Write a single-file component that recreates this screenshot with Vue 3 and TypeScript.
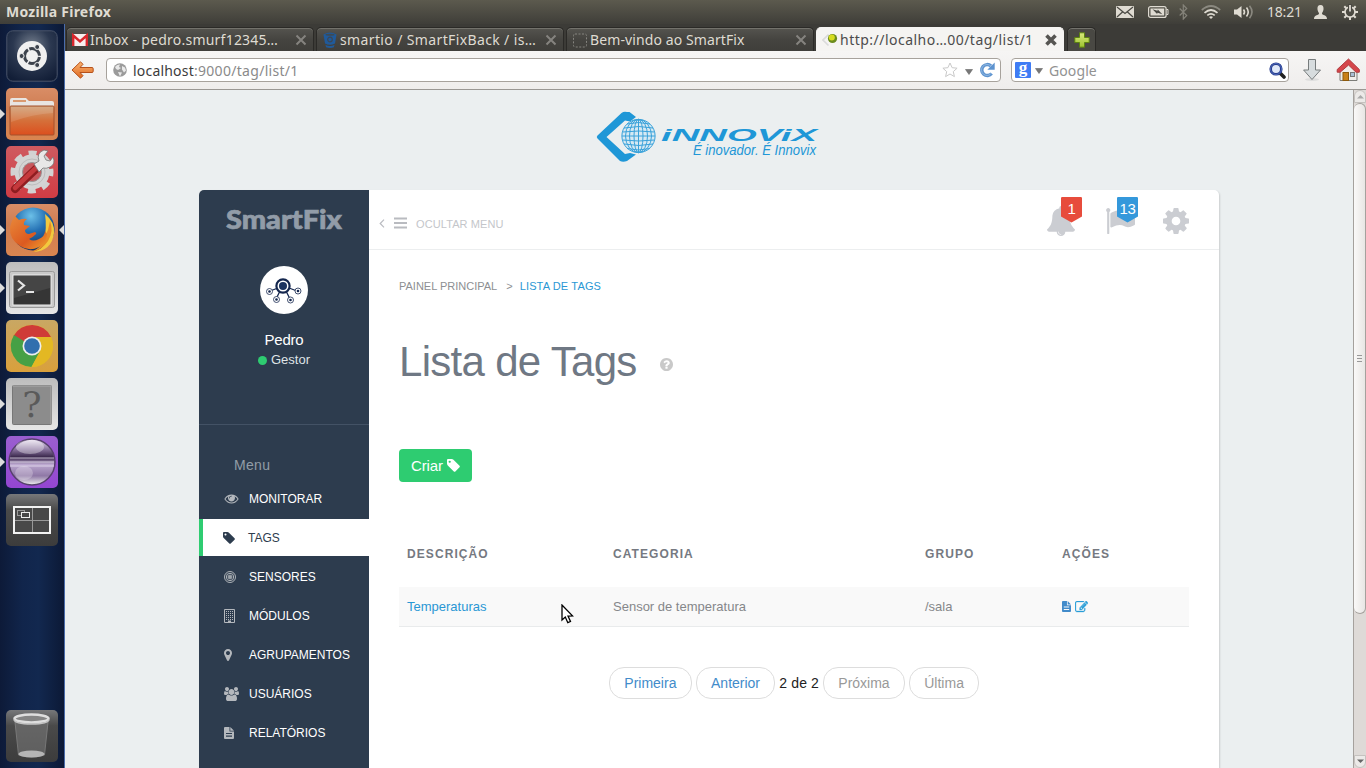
<script setup lang="ts">
interface Tab { title: string; icon: string; active?: boolean; cls: string }
interface MenuItem { label: string; icon: string; active?: boolean; w: number; h: number; box: string }

const tabs: Tab[] = [
  { title: 'Inbox - pedro.smurf12345…', icon: 'gmail', cls: 't1' },
  { title: 'smartio / SmartFixBack / is…', icon: 'bucket', cls: 't2' },
  { title: 'Bem-vindo ao SmartFix', icon: 'blank', cls: 't3' },
  { title: 'http://localho…00/tag/list/1', icon: 'site', active: true, cls: 't4' },
]

const paths: Record<string, string> = {
  eye: 'M1664 960q-152-236-381-353 61 104 61 225 0 185-131.5 316.5t-316.5 131.5-316.5-131.5-131.5-316.5q0-121 61-225-229 117-381 353 133 205 333.5 326.5t434.5 121.5 434.5-121.5 333.5-326.5zm-720-384q0-20-14-34t-34-14q-125 0-214.5 89.5t-89.5 214.5q0 20 14 34t34 14 34-14 14-34q0-86 61-147t147-61q20 0 34-14t14-34zm848 384q0 34-20 69-140 230-376.5 368.5t-499.5 138.5-499.5-139-376.5-368q-20-35-20-69t20-69q140-229 376.5-368t499.5-139 499.5 139 376.5 368q20 35 20 69z',
  tag: 'M576 448q0-53-37.5-90.5t-90.5-37.5-90.5 37.5-37.5 90.5 37.5 90.5 90.5 37.5 90.5-37.5 37.5-90.5zm1067 576q0 53-37 90l-491 492q-39 37-91 37-53 0-90-37l-715-716q-38-37-64.5-101t-26.5-117v-416q0-52 38-90t90-38h416q53 0 117 26.5t102 64.5l715 714q37 39 37 91z',
  cog: 'M1152 896q0-106-75-181t-181-75-181 75-75 181 75 181 181 75 181-75 75-181zm512-109v222q0 12-8 23t-20 13l-185 28q-19 54-39 91 35 50 107 138 10 12 10 25t-9 23q-27 37-99 108t-94 71q-12 0-26-9l-138-108q-44 23-91 38-16 136-29 186-7 28-36 28h-222q-14 0-24.5-8.5t-11.5-21.5l-28-184q-49-16-90-37l-141 107q-10 9-25 9-14 0-25-11-126-114-165-168-7-10-7-23 0-12 8-23 15-21 51-66.5t54-70.5q-27-50-41-99l-183-27q-13-2-21-12.5t-8-23.5v-222q0-12 8-23t19-13l186-28q14-46 39-92-40-57-107-138-10-12-10-24 0-10 9-23 26-36 98.5-107.5t94.5-71.5q13 0 26 10l138 107q44-23 91-38 16-136 29-186 7-28 36-28h222q14 0 24.5 8.5t11.5 21.5l28 184q49 16 90 37l142-107q9-9 24-9 13 0 25 10 129 119 165 170 7 8 7 22 0 12-8 23-15 21-51 66.5t-54 70.5q26 50 41 98l183 28q13 2 21 12.5t8 23.5z',
  bell: 'M912 1696q0-16-16-16-59 0-101.5-42.5t-42.5-101.5q0-16-16-16t-16 16q0 73 51.5 124.5t124.5 51.5q16 0 16-16zm816-288q0 52-38 90t-90 38h-448q0 106-75 181t-181 75-181-75-75-181h-448q-52 0-90-38t-38-90q50-42 91-88t85-119.5 74.5-158.5 50-206 19.5-260q0-152 117-282.5t307-158.5q-8-19-8-39 0-40 28-68t68-28 68 28 28 68q0 20-8 39 190 28 307 158.5t117 282.5q0 139 19.5 260t50 206 74.5 158.5 85 119.5 91 88z',
  flag: 'M320 256q0 72-64 110v1266q0 13-9.5 22.5t-22.5 9.5h-64q-13 0-22.5-9.5t-9.5-22.5v-1266q-64-38-64-110 0-53 37.5-90.5t90.5-37.5 90.5 37.5 37.5 90.5zm1472 64v763q0 25-12.5 38.5t-39.5 27.5q-215 116-369 116-61 0-123.5-22t-108.5-48-115.5-48-142.5-22q-192 0-464 146-17 9-33 9-26 0-45-19t-19-45v-742q0-32 31-55 21-14 79-43 236-120 421-120 107 0 200 29t219 88q38 19 88 19 54 0 117.5-21t110-47 88-47 54.5-21q26 0 45 19t19 45z',
  marker: 'M1152 640q0-106-75-181t-181-75-181 75-75 181 75 181 181 75 181-75 75-181zm256 0q0 109-33 179l-364 774q-16 33-47.5 52t-67.5 19-67.5-19-46.5-52l-365-774q-33-70-33-179 0-212 150-362t362-150 362 150 150 362z',
  question: 'M1024 1376v-192q0-14-9-23t-23-9h-192q-14 0-23 9t-9 23v192q0 14 9 23t23 9h192q14 0 23-9t9-23zm256-672q0-88-55.5-163t-138.5-116-170-41q-243 0-371 213-15 24 8 42l132 100q7 6 19 6 16 0 25-12 53-68 86-92 34-24 86-24 48 0 85.5 26t37.5 59q0 38-20 61t-68 45q-63 28-115.5 86.5t-52.5 125.5v36q0 14 9 23t23 9h192q14 0 23-9t9-23q0-19 21.5-49.5t54.5-49.5q32-18 49-28.5t46-35 44.5-48 28-60.5 12.5-81zm384 192q0 209-103 385.5t-279.5 279.5-385.5 103-385.5-103-279.5-279.5-103-385.5 103-385.5 279.5-279.5 385.5-103 385.5 103 279.5 279.5 103 385.5z',
  edit: 'M888 1184l116-116-152-152-116 116v56h96v96h56zm440-720q-16-16-33 1l-350 350q-17 17-1 33t33-1l350-350q17-17 1-33zm80 594v190q0 119-84.5 203.5t-203.5 84.5h-832q-119 0-203.5-84.5t-84.5-203.5v-832q0-119 84.5-203.5t203.5-84.5h832q63 0 117 25 15 7 18 23 3 17-9 29l-49 49q-14 14-32 8-23-6-45-6h-832q-66 0-113 47t-47 113v832q0 66 47 113t113 47h832q66 0 113-47t47-113v-126q0-13 9-22l64-64q15-15 35-7t20 29zm-96-738l288 288-672 672h-288v-288zm444 132l-92 92-288-288 92-92q28-28 68-28t68 28l152 152q28 28 28 68t-28 68z',
  users: 'M593 896q-162 5-265 128h-134q-82 0-138-40.5t-56-118.5q0-353 124-353 6 0 43.5 21t97.5 42.5 119 21.5q67 0 133-23-5 37-5 66 0 139 81 256zm1071 637q0 120-73 189.5t-194 69.5h-874q-121 0-194-69.5t-73-189.5q0-53 3.5-103.5t14-109 26.5-108.5 43-97.5 62-81 85.5-53.5 111.5-20q10 0 43 21.5t73 48 107 48 135 21.5 135-21.5 107-48 73-48 43-21.5q61 0 111.5 20t85.5 53.5 62 81 43 97.5 26.5 108.5 14 109 3.5 103.5zm-1024-1277q0 106-75 181t-181 75-181-75-75-181 75-181 181-75 181 75 75 181zm704 384q0 159-112.5 271.5t-271.5 112.5-271.5-112.5-112.5-271.5 112.5-271.5 271.5-112.5 271.5 112.5 112.5 271.5zm576 225q0 78-56 118.5t-138 40.5h-134q-103-123-265-128 81-117 81-256 0-29-5-66 66 23 133 23 59 0 119-21.5t97.5-42.5 43.5-21q124 0 124 353zm-128-609q0 106-75 181t-181 75-181-75-75-181 75-181 181-75 181 75 75 181z',
  file: 'M0 1Q0 0 1 0H5.500V4.500H10V11Q10 12 9 12H1Q0 12 0 11ZM6.300 0L10 3.700H6.300ZM2 6V7.100H8V6ZM2 8.600V9.700H8V8.600Z',
}

const menu: MenuItem[] = [
  { label: 'MONITORAR', icon: 'eye', w: 15, h: 14, box: '0 64 1792 1792' },
  { label: 'TAGS', icon: 'tag', active: true, w: 12, h: 12, box: '128 128 1536 1536' },
  { label: 'SENSORES', icon: 'sensor', w: 12, h: 12, box: '0 0 12 12' },
  { label: 'MÓDULOS', icon: 'building', w: 11, h: 14, box: '0 0 11 14' },
  { label: 'AGRUPAMENTOS', icon: 'marker', w: 8, h: 12, box: '384 128 1024 1536' },
  { label: 'USUÁRIOS', icon: 'users', w: 15, h: 14, box: '0 0 1920 1792' },
  { label: 'RELATÓRIOS', icon: 'file', w: 10, h: 12, box: '0 0 10 12' },
]

const rows = [{ name: 'Temperaturas', category: 'Sensor de temperatura', group: '/sala' }]
const launcher = [
  { id: 'dash' }, { id: 'files', run: true }, { id: 'settings' },
  { id: 'firefox', run: true, focus: true }, { id: 'term', run: true },
  { id: 'chrome' }, { id: 'unknown', run: true }, { id: 'eclipse', run: true }, { id: 'spaces' },
]
const dots: number[][] = []
for (let r = 0; r < 5; r++) for (let c = 0; c < 4; c++) dots.push([2 + c * 2, 2 + r * 2])
</script>

<template>
  <div class="desktop">
    <svg class="defs" width="0" height="0" aria-hidden="true">
      <defs>
        <linearGradient id="gOrange" x1="0" y1="0" x2="0" y2="1"><stop offset="0" stop-color="#d98d66" /><stop offset=".4" stop-color="#cf7d52" /><stop offset="1" stop-color="#d98550" /></linearGradient>
        <linearGradient id="gFolder" x1="0" y1="0" x2="0" y2="1"><stop offset="0" stop-color="#d0a076" /><stop offset=".5" stop-color="#d5703a" /><stop offset="1" stop-color="#dc4f1e" /></linearGradient>
        <linearGradient id="gRed" x1="0" y1="0" x2="0" y2="1"><stop offset="0" stop-color="#cf5a60" /><stop offset="1" stop-color="#d03c44" /></linearGradient>
        <linearGradient id="gSilver" x1="0" y1="0" x2="0" y2="1"><stop offset="0" stop-color="#bdbdbd" /><stop offset="1" stop-color="#e6e6e6" /></linearGradient>
        <linearGradient id="gGold" x1="0" y1="0" x2="0" y2="1"><stop offset="0" stop-color="#c9a763" /><stop offset="1" stop-color="#d9a03c" /></linearGradient>
        <linearGradient id="gPurple" x1="0" y1="0" x2="0" y2="1"><stop offset="0" stop-color="#9a5fd0" /><stop offset="1" stop-color="#9446d2" /></linearGradient>
        <linearGradient id="gDark" x1="0" y1="0" x2="0" y2="1"><stop offset="0" stop-color="#77787a" /><stop offset=".3" stop-color="#4a4a4a" /><stop offset="1" stop-color="#3c3c3c" /></linearGradient>
        <radialGradient id="gDash" cx=".5" cy=".3" r=".75"><stop offset="0" stop-color="#76808f" /><stop offset=".5" stop-color="#2b3850" /><stop offset="1" stop-color="#121e37" /></radialGradient>
        <radialGradient id="gGlobe" cx=".45" cy=".2" r=".8"><stop offset="0" stop-color="#6cc0e8" /><stop offset=".45" stop-color="#2571b4" /><stop offset="1" stop-color="#12305f" /></radialGradient>
        <linearGradient id="gFox" x1="0" y1="0" x2="1" y2="1"><stop offset="0" stop-color="#e8893a" /><stop offset=".6" stop-color="#dc5a20" /><stop offset="1" stop-color="#f0a030" /></linearGradient>
        <linearGradient id="gEcl" x1="0" y1="0" x2="0" y2="1"><stop offset="0" stop-color="#eee6f4" /><stop offset=".22" stop-color="#8b76a0" /><stop offset=".4" stop-color="#362448" /><stop offset=".55" stop-color="#bca8d0" /><stop offset=".8" stop-color="#8f78a6" /><stop offset="1" stop-color="#eee" /></linearGradient>
        <linearGradient id="gArrow" x1="0" y1="0" x2="0" y2="1"><stop offset="0" stop-color="#fbb26f" /><stop offset="1" stop-color="#de6a23" /></linearGradient>
        <linearGradient id="gPlus" x1="0" y1="0" x2="0" y2="1"><stop offset="0" stop-color="#d8ea7c" /><stop offset="1" stop-color="#9cc22f" /></linearGradient>
      </defs>
    </svg>

    <header class="panel">
      <span class="panel-title">Mozilla Firefox</span>
      <div class="tray">
        <svg class="i-mail" width="18" height="12" viewBox="0 0 18 12"><rect width="18" height="12" rx="1" fill="#dfdbd2" /><path d="M1 1l8 6.500L17 1M1 11l5.500-5M17 11l-5.500-5" fill="none" stroke="#4a4943" stroke-width="1.200" /></svg>
        <svg class="i-bat" width="21" height="12" viewBox="0 0 21 12"><rect x=".6" y=".6" width="17.500" height="10.800" rx="2" fill="none" stroke="#dfdbd2" stroke-width="1.200" /><path d="M18.500 3.500H20v5h-1.500" fill="none" stroke="#dfdbd2" /><rect x="2.500" y="2.500" width="13.700" height="7" fill="#dfdbd2" /><path d="M4.500 3.200l5 1.500.3-1.200 4.500 4.800-4.800-1.500-.4 1.200z" fill="#4a4943" /></svg>
        <svg class="i-bt" width="9" height="16" viewBox="0 0 9 16"><path d="M.7 4.500l7 7L4.300 15V1l3.400 3.500-7 7" fill="none" stroke="#85837a" stroke-width="1.200" /></svg>
        <svg class="i-wifi" width="20" height="14" viewBox="0 0 20 14"><g fill="none" stroke="#dfdbd2" stroke-width="1.700"><path d="M.8 5q9.200-8 18.400 0" stroke="#8b8980" /><path d="M3.500 7.800q6.500-5.600 13 0" /><path d="M6.300 10.400q3.700-3 7.400 0" /></g><path d="M8 12q2-1.500 4 0l-2 2z" fill="#dfdbd2" /></svg>
        <svg class="i-vol" width="20" height="14" viewBox="0 0 20 14"><path d="M0 4.500h3L7.500 1v12L3 9.500H0z" fill="#dfdbd2" /><g fill="none" stroke="#dfdbd2" stroke-width="1.600"><path d="M9.500 4.500q2 2.500 0 5" /><path d="M12.500 2.500q3.500 4.500 0 9" /><path d="M15.500.8q5 6.200 0 12.400" stroke="#8b8980" /></g></svg>
        <span class="clock">18:21</span>
        <svg class="i-user" width="13" height="14" viewBox="0 0 13 14"><path d="M6.500 0C9 0 9.800 1.800 9.500 4.500 9.300 6.500 8 7.500 8 8.800c0 1.500 5 1 5 5.200H0c0-4.200 5-3.700 5-5.200 0-1.300-1.300-2.300-1.500-4.300C3.200 1.800 4 0 6.500 0z" fill="#dfdbd2" /></svg>
        <svg class="i-power" width="16" height="16" viewBox="0 0 16 16"><circle cx="8" cy="8" r="5" fill="none" stroke="#dfdbd2" stroke-width="1.700" /><g stroke="#dfdbd2" stroke-width="2"><path d="M0 8h3M13 8h3M8 13v3M2.300 2.300l2 2M13.700 2.300l-2 2M2.300 13.700l2-2M13.700 13.700l-2-2" /></g><path d="M6 0h4v8H6z" fill="#4a4943" /><path d="M8 1v6.500" stroke="#dfdbd2" stroke-width="1.800" /></svg>
      </div>
    </header>

    <div class="workspace">
      <aside class="launcher">
        <div v-for="l in launcher" :key="l.id" class="slot">
          <i v-if="l.run" class="run"></i>
          <svg width="52" height="52" viewBox="0 0 52 52">
            <g v-if="l.id === 'dash'"><rect x=".8" y=".8" width="50.400" height="50.400" rx="6" fill="url(#gDash)" stroke="#4a556a" /><circle cx="26" cy="26" r="15" fill="#f0f0f0" /><circle cx="26" cy="26" r="7.500" fill="none" stroke="#3d434d" stroke-width="3" stroke-dasharray="14.200 1.500" stroke-dashoffset="-1" /><g fill="#3d434d" stroke="#f0f0f0" stroke-width="1"><circle cx="15.600" cy="26" r="2.500" /><circle cx="31.200" cy="17" r="2.500" /><circle cx="31.200" cy="35" r="2.500" /></g></g>
            <g v-else-if="l.id === 'files'"><rect width="52" height="52" rx="5" fill="url(#gOrange)" /><path d="M4 20v-8q0-2 2-2h14l3 3h23q2 0 2 2v5z" fill="#e8e5e2" /><rect x="7" y="12" width="13" height="2" fill="#d99a70" /><rect x="4" y="18" width="44" height="29" rx="1" fill="url(#gFolder)" stroke="#a4502c" /><path d="M5 34q22-8 42-9V19H5z" fill="#fff" opacity=".12" /></g>
            <g v-else-if="l.id === 'settings'"><rect width="52" height="52" rx="5" fill="url(#gRed)" /><circle cx="26" cy="26" r="19" fill="none" stroke="#d2d2d2" stroke-width="5" stroke-dasharray="8 6.920" stroke-dashoffset="4" /><circle cx="26" cy="26" r="13.500" fill="none" stroke="#d4d4d4" stroke-width="8" /><circle cx="26" cy="26" r="13" fill="none" stroke="#bdbdbd" stroke-width="1" /><circle cx="26" cy="26" r="9.500" fill="#c8575c" stroke="#999" /><path d="M9 43L33 20" stroke="#8f1d20" stroke-width="8" stroke-linecap="round" /><path d="M9 42L32 20" stroke="#c5393c" stroke-width="4.500" stroke-linecap="round" /><path d="M28 18l5-3q-3-8 5-11l4 1-4 5 2 4 4 1 3-4q3 7-3 10-4 2-7 1l-4 4z" fill="#e8e8e8" stroke="#777" stroke-width=".8" /></g>
            <g v-else-if="l.id === 'firefox'"><rect width="52" height="52" rx="5" fill="url(#gOrange)" /><circle cx="27" cy="25" r="21.500" fill="url(#gGlobe)" /><path d="M39 10q10 8 9 19-2 18-21 19 14-4 14-18-1 4-3 6 3-12 1-26z" fill="#f2c93e" /><path d="M44 17q4 10-2 20-6 9-16 11 14-8 14-18l2-4z" fill="#e98b28" /><path d="M9 12l4 4q4-2 8-1-4 3-3 6l6 1-5 4q0 4 4 4l6-2q2 1 1 2-4 4-7 5 4 3 10 0 6-3 6-8l2 3q0 9-8 13-10 5-19-1Q3 35 4 23q1-6 5-11z" fill="url(#gFox)" /></g>
            <g v-else-if="l.id === 'term'"><rect width="52" height="52" rx="5" fill="url(#gSilver)" /><rect x="3.500" y="9.500" width="45" height="36" rx="2" fill="#c9c9c9" stroke="#999" /><rect x="7" y="13" width="38" height="30" fill="#353535" stroke="#eee" /><path d="M8 14h36v12L8 36z" fill="#555" opacity=".5" /><path d="M12 18.500l6 5-6 5M20 30h8" stroke="#e5e5e5" stroke-width="2.200" fill="none" /></g>
            <g v-else-if="l.id === 'chrome'"><rect width="52" height="52" rx="5" fill="url(#gGold)" /><circle cx="26" cy="26" r="21" fill="#e3b823" /><path d="M26 26L7.500 16A21 21 0 0 1 45 17H26z" fill="#cf3b37" /><path d="M26 26L8 15A21 21 0 0 0 25.500 47l9-16z" fill="#46a045" /><path d="M26 17h19a21 21 0 0 1-19.500 30l8.500-16z" fill="#e3b823" /><circle cx="26" cy="26" r="9.500" fill="#eee" /><circle cx="26" cy="26" r="7.800" fill="#316fae" /></g>
            <g v-else-if="l.id === 'unknown'"><rect width="52" height="52" rx="5" fill="url(#gSilver)" /><rect x="6.500" y="7.500" width="39" height="39" rx="1" fill="#8c8c8c" stroke="#777" /><path d="M7 8h38v38" fill="none" stroke="#aaa" /><text x="26" y="38.500" text-anchor="middle" class="qm">?</text></g>
            <g v-else-if="l.id === 'eclipse'"><rect width="52" height="52" rx="5" fill="url(#gPurple)" /><circle cx="26" cy="26" r="23" fill="url(#gEcl)" stroke="#56416c" stroke-width="1.500" /><path d="M4 22h44M4 26h44M4 30h44" stroke="#e8dff0" stroke-width="1.200" opacity=".8" /><ellipse cx="24" cy="11" rx="14" ry="7" fill="#fff" opacity=".35" /><ellipse cx="18" cy="37" rx="9" ry="7" fill="#fff" opacity=".25" /></g>
            <g v-else><rect width="52" height="52" rx="5" fill="url(#gDark)" /><rect x="8" y="13" width="36" height="26" fill="#484848" stroke="#f2f2f2" stroke-width="2" /><path d="M26.500 14v24M9 26.500h34" stroke="#999" /><rect x="11.500" y="16.500" width="7" height="5" fill="none" stroke="#999" /><rect x="15.500" y="18.500" width="8" height="5" fill="#484848" stroke="#eee" /></g>
          </svg>
          <i v-if="l.focus" class="focus"></i>
        </div>
        <div class="slot trash">
          <svg width="52" height="52" viewBox="0 0 52 52"><rect width="52" height="52" rx="5" fill="url(#gDark)" /><path d="M9 12l3.500 33q13 4 26 0L42 12z" fill="#808080" opacity=".5" stroke="#aaa" /><ellipse cx="25.500" cy="44" rx="13" ry="3.500" fill="#b5b5b5" /><ellipse cx="25.500" cy="8.500" rx="17" ry="4" fill="#858585" stroke="#dedede" stroke-width="2.500" /><path d="M8 9.500q1 4.500 17.500 4.500T43 9.500" fill="none" stroke="#c4c4c4" stroke-width="1.500" /></svg>
        </div>
      </aside>

      <section class="browser">
        <nav class="tabs">
          <div v-for="t in tabs" :key="t.title" class="tab" :class="[t.cls, { on: t.active }]">
            <svg class="fav" width="16" height="16" viewBox="0 0 16 16">
              <g v-if="t.icon === 'gmail'"><rect y="2" width="16" height="12" rx="1" fill="#f6eeee" /><path d="M1.200 14V3.500L8 9.500l6.800-6V14" fill="none" stroke="#d8262c" stroke-width="2.400" /></g>
              <g v-else-if="t.icon === 'bucket'"><path d="M1.500 2.500q6.500-4 13 0L13 11.500q-5 2.500-10 0z" fill="#205a9a" /><ellipse cx="8" cy="2.800" rx="4.500" ry="1" fill="#3d4a55" /><circle cx="8" cy="7.500" r="2.300" fill="none" stroke="#3d4652" stroke-width="1.200" /><path d="M3.500 13q4.500 2 9 0l-.6 2.200q-4 1.600-7.800 0z" fill="#205a9a" /></g>
              <rect v-else-if="t.icon === 'blank'" x="1.500" y="2" width="13" height="13" rx="1.500" fill="none" stroke="#85847f" stroke-dasharray="2 1.500" />
              <g v-else><path d="M6.500 2.500L1 8l5.500 5.500" fill="none" stroke="#dadada" stroke-width="1.600" /><circle cx="10.500" cy="6.500" r="4.600" fill="#6c8c1e" /><circle cx="9.800" cy="5.500" r="3" fill="#d6dc20" /></g>
            </svg>
            <span class="tab-text">{{ t.title }}</span>
            <svg class="close" width="12" height="12" viewBox="0 0 12 12"><path d="M1.500 1.500l9 9M10.500 1.500l-9 9" :stroke="t.active ? '#565552' : '#85837f'" :stroke-width="t.active ? 3.6 : 2" /></svg>
          </div>
          <div class="newtab"><svg width="16" height="16" viewBox="0 0 16 16"><path d="M5.500.8h5v4.700h4.700v5h-4.700v4.700h-5v-4.700H.8v-5h4.700z" fill="url(#gPlus)" stroke="#5d8212" /></svg></div>
        </nav>

        <div class="toolbar">
          <svg class="back" width="23" height="18" viewBox="0 0 23 18"><path d="M9.500.8L1 9l8.500 8.200 2.500-2.500-3-3.200h12q1.200 0 1.200-1.200V7.700q0-1.200-1.200-1.200H9l3-3.200z" fill="url(#gArrow)" stroke="#b5511c" /></svg>
          <div class="urlbar">
            <svg width="14" height="14" viewBox="0 0 14 14"><circle cx="7" cy="7" r="6.800" fill="#9b9b9b" /><path d="M2 4q2-3 5-2.500L6 4l2 1-3 2-2-1zM9 3l3 1.500 1 3-2 2-2-3zM5 9l4 .500-2 4z" fill="#e9e9e9" /></svg>
            <span class="url"><b>localhost</b>:9000/tag/list/1</span>
            <svg class="star" width="16" height="16" viewBox="0 0 16 16"><path d="M8 1l2.100 4.700 5 .5-3.800 3.400 1.100 5L8 12l-4.400 2.600 1.100-5L.9 6.200l5-.5z" fill="#fff" stroke="#c9c9c9" /></svg>
            <svg class="dd" width="8" height="6" viewBox="0 0 8 6"><path d="M.5.500h7L4 5.500z" fill="#777" stroke="#666" stroke-width=".6" /></svg>
            <svg class="reload" width="16" height="16" viewBox="0 0 16 16"><path d="M12.600 11.500A5.500 5.500 0 1 1 12 4" fill="none" stroke="#5d93cf" stroke-width="3.400" /><path d="M15.700.5v7.300H8.300z" fill="#5d93cf" /><path d="M12.600 11A5.500 5.500 0 1 1 12 4.200" fill="none" stroke="#9cc0e6" stroke-width=".8" /></svg>
          </div>
          <div class="search">
            <span class="goog">g</span>
            <svg class="dd2" width="8" height="6" viewBox="0 0 8 6"><path d="M.5.500h7L4 5.500z" fill="#777" stroke="#666" stroke-width=".6" /></svg>
            <span class="ph">Google</span>
            <svg width="17" height="17" viewBox="0 0 17 17"><path d="M11.500 11.500l3.500 3.500" stroke="#222" stroke-width="3.600" stroke-linecap="round" /><circle cx="7" cy="7" r="5.300" fill="#dfe8f8" stroke="#243a8c" stroke-width="2.600" /><circle cx="7" cy="7" r="5.500" fill="none" stroke="#5b76c4" stroke-width=".8" /></svg>
          </div>
          <svg class="down" width="18" height="22" viewBox="0 0 18 22"><ellipse cx="9" cy="20.500" rx="7" ry="1.500" fill="#ddd" /><path d="M5.500.5h7v10.500h5L9 20.500.6 11h4.900z" fill="#d7dcde" stroke="#777c7d" /></svg>
          <svg class="home" width="24" height="24" viewBox="0 0 24 24"><path d="M4 12v10.500h17V12l-8.500-8z" fill="#f0eeeb" stroke="#7c7c78" /><path d="M12.500 1L1.200 11.500v2.700h3L12.500 7l7.500 7.200h3.300v-2.700z" fill="#d5454a" stroke="#b03a3e" /><rect x="7" y="14.500" width="5.500" height="8" fill="#c98018" stroke="#8e5a0c" /><rect x="14.500" y="14.500" width="4" height="4" fill="#a9bfd6" stroke="#777" /></svg>
        </div>

        <div class="viewport">
          <div class="page">
            <div class="brand">
              <svg width="240" height="56" viewBox="0 0 240 56">
                <path d="M27.500 4q2.500-2 5.500-1h2.500l6.500 5-6 4.500-5-1L12.500 28 31 45l5-1 6 1.500-9 6.500q-4 1.500-7 0L3.500 29.500q-1.500-1.500 0-3z" fill="#1f97d7" />
                <circle cx="44.500" cy="27" r="17" fill="#d5e9f3" />
                <g fill="none" stroke="#3aa2da" stroke-width="1"><circle cx="44.500" cy="27" r="16.600" /><ellipse cx="44.500" cy="27" rx="13" ry="16.600" /><ellipse cx="44.500" cy="27" rx="9" ry="16.600" /><ellipse cx="44.500" cy="27" rx="4.500" ry="16.600" /><path d="M44.500 10.500v33M33 15q11.500-3 23 0M30 19q15-3 29 0M28.500 23q16.500-2 32 0M28 27h33M28.500 31q16.500 2 32 0M30 35q15 3 29 0M33 39.500q11.500 3 23 0" /></g>
                <text x="67" y="31.500" class="bt" textLength="156" lengthAdjust="spacingAndGlyphs">iNNOViX</text>
                <text x="99" y="46" class="bs" textLength="123" lengthAdjust="spacingAndGlyphs">É inovador. É Innovix</text>
              </svg>
            </div>

            <div class="card">
              <aside class="side">
                <div class="sf"><svg width="140" height="34" viewBox="0 0 140 34"><text x="1" y="24.500" class="sft" textLength="116" lengthAdjust="spacingAndGlyphs">SmartFix</text></svg></div>
                <div class="profile">
                  <svg width="48" height="48" viewBox="0 0 48 48"><circle cx="24" cy="24" r="24" fill="#fff" /><g stroke="#14264e" stroke-width="1.300" fill="none"><path d="M18 22l-8 3M29 22l8 3M20 25l-4 8M26 25l4 8" /><g fill="#fff" stroke-width=".8"><circle cx="9.500" cy="25.500" r="3" /><circle cx="38" cy="25" r="3" /><circle cx="16.500" cy="33.500" r="3" /><circle cx="30.500" cy="34" r="3" /></g></g><circle cx="23" cy="20" r="6.600" fill="#fff" stroke="#14264e" stroke-width="2.200" /><circle cx="23" cy="20" r="4" fill="#1b335f" /><g fill="#14264e"><circle cx="9.500" cy="25.500" r="1.300" /><circle cx="38" cy="25" r="1.300" /><circle cx="16.500" cy="33.500" r="1.300" /><circle cx="30.500" cy="34" r="1.300" /></g></svg>
                  <div class="name">Pedro</div>
                  <div class="role"><i></i>Gestor</div>
                </div>
                <div class="mlabel">Menu</div>
                <ul class="menu">
                  <li v-for="m in menu" :key="m.label" :class="{ act: m.active }">
                    <span class="mi">
                      <svg :width="m.w" :height="m.h" :viewBox="m.box">
                        <g v-if="m.icon === 'sensor'" fill="none" stroke="currentColor" stroke-width=".95"><circle cx="6" cy="6" r="5.500" /><circle cx="6" cy="6" r="3.700" /><circle cx="6" cy="6" r="1.900" /><circle cx="6" cy="6" r=".7" fill="currentColor" /></g>
                        <g v-else-if="m.icon === 'building'"><path d="M.5.500h10v13H.500z" fill="none" stroke="currentColor" /><rect v-for="d in dots" :key="d.join()" :x="d[0]" :y="d[1]" width="1" height="1" fill="currentColor" /><path d="M4 11.500h3V14H4z" fill="currentColor" /></g>
                        <path v-else :d="paths[m.icon]" fill="currentColor" fill-rule="evenodd" />
                      </svg>
                    </span>
                    <span>{{ m.label }}</span>
                  </li>
                </ul>
              </aside>

              <main class="main">
                <div class="bar">
                  <svg class="chev" width="6" height="9" viewBox="0 0 6 9"><path d="M5 .7L1.200 4.500 5 8.300" fill="none" stroke="#b9bbc0" stroke-width="1.200" /></svg>
                  <svg class="burger" width="13" height="12" viewBox="0 0 13 12"><path d="M0 1.500h13M0 6h13M0 10.500h13" stroke="#b9bbc0" stroke-width="2" /></svg>
                  <span class="hide">OCULTAR MENU</span>
                  <div class="acts">
                    <span class="act-i bell"><svg width="28" height="30" viewBox="64 0 1664 1792" preserveAspectRatio="none"><path :d="paths.bell" /></svg><em class="badge red">1</em></span>
                    <span class="act-i flag"><svg width="30" height="26" viewBox="0 128 1792 1536" preserveAspectRatio="none"><path :d="paths.flag" /></svg><em class="badge blue">13</em></span>
                    <span class="act-i gear"><svg width="26" height="26" viewBox="128 128 1536 1536"><path :d="paths.cog" /></svg></span>
                  </div>
                </div>
                <div class="content">
                  <div class="crumb">PAINEL PRINCIPAL<span>&gt;</span><a>LISTA DE TAGS</a></div>
                  <h1>Lista de Tags <svg width="13" height="13" viewBox="128 128 1536 1536"><path :d="paths.question" fill="#c9c9c9" /></svg></h1>
                  <button class="create">Criar <svg width="13" height="13" viewBox="128 128 1536 1536"><path :d="paths.tag" fill="#fff" /></svg></button>
                  <div class="grid head"><span>DESCRIÇÃO</span><span>CATEGORIA</span><span>GRUPO</span><span>AÇÕES</span></div>
                  <div v-for="r in rows" :key="r.name" class="grid row">
                    <span class="link">{{ r.name }}</span><span>{{ r.category }}</span><span>{{ r.group }}</span>
                    <span class="ops"><svg width="9" height="11" viewBox="0 0 10 12" preserveAspectRatio="none"><path :d="paths.file" fill="#428bca" fill-rule="evenodd" /></svg><svg width="13" height="12" viewBox="0 128 1792 1536" preserveAspectRatio="none"><path :d="paths.edit" fill="#2a9fd8" stroke="#2a9fd8" stroke-width="40" /></svg></span>
                  </div>
                  <div class="pager">
                    <a>Primeira</a><a>Anterior</a><span>2 de 2</span><a class="off">Próxima</a><a class="off">Última</a>
                  </div>
                </div>
              </main>
            </div>
          </div>
          <div class="scroll">
            <div class="sbtn"><svg width="7" height="5" viewBox="0 0 7 5"><path d="M0 4.500L3.500 1 7 4.500z" fill="#aaa" /></svg></div>
            <div class="thumb"><i></i><i></i><i></i></div>
            <div class="sbtn end"><svg width="7" height="5" viewBox="0 0 7 5"><path d="M0 .5L3.500 4 7 .5z" fill="#666" /></svg></div>
          </div>
        </div>
      </section>
    </div>
    <svg class="cursor" width="13" height="20" viewBox="0 0 13 20"><path d="M1 1v15l3.300-3 2.500 5.700 2.700-1.200L7 12l4.500-.2z" fill="#fff" stroke="#000" stroke-width="1.300" /></svg>
  </div>
</template>

<style>
html, body { margin: 0; overflow: hidden; }
</style>

<style scoped>
* { box-sizing: border-box; }
svg { display: block; flex: none; }
.desktop { position: relative; width: 1366px; height: 768px; overflow: hidden; display: flex; flex-direction: column; font-family: "Liberation Sans", Arial, sans-serif; background: #ebeff0; }
.defs { position: absolute; }
.panel { height: 24px; flex: none; display: flex; align-items: center; padding: 0 8px 0 6px; background: linear-gradient(#5c5a4e, #3f3e39); font-family: "Noto Sans", sans-serif; color: #dfdbd2; }
.panel-title { font-size: 14px; font-weight: 700; line-height: 24px; white-space: nowrap; letter-spacing: .25px; }
.tray { margin-left: auto; display: flex; align-items: center; }
.i-bat { margin-left: 14px; }
.i-bt { margin-left: 10px; }
.i-wifi { margin-left: 13px; }
.i-vol { margin-left: 13px; }
.clock { font-size: 14px; width: 35px; margin-left: 13px; letter-spacing: -.2px; white-space: nowrap; line-height: 24px; }
.i-user { margin-left: 12px; }
.i-power { margin-left: 15px; }
.workspace { flex: 1; display: flex; min-height: 0; }
.launcher { width: 65px; flex: none; padding: 6px 0 6px; border-right: 1px solid #4a6cab; background: linear-gradient(90deg, #0d1a38, #11254b 35%, #12284f 60%, #0c1936); display: flex; flex-direction: column; gap: 6px; }
.slot { height: 52px; flex: none; padding-left: 6px; position: relative; }
.slot.trash { margin-top: auto; }
.run, .focus { position: absolute; top: 21px; border: 5px solid transparent; }
.run { left: 0; border-left-color: #dcdcdc; border-right: 0; }
.focus { right: 0; border-right-color: #dcdcdc; border-left: 0; }
.qm { font: 36px "DejaVu Serif", serif; fill: #5a5a5a; }
.browser { flex: 1; display: flex; flex-direction: column; min-width: 0; }
.tabs { height: 27px; flex: none; background: #3c3b37; display: flex; align-items: flex-end; padding-left: 1px; gap: 2px; font-family: "Noto Sans", sans-serif; font-size: 14px; color: #dfdbd2; }
.tab { width: 248px; height: 24px; display: flex; align-items: center; padding: 0 6px 0 5px; border: 1px solid #2b2a27; border-bottom: 0; border-radius: 5px 5px 0 0; background: linear-gradient(#55544f, #454440 50%, #3f3e3a); box-shadow: inset 0 1px #73726c; }
.tab.on { background: #f5f4f2; color: #4c4c4c; border-color: #f5f4f2; box-shadow: none; }
.t1 .tab-text { letter-spacing: .23px; }
.t2 .tab-text { letter-spacing: .37px; }
.t3 .tab-text { letter-spacing: .1px; }
.t4 .tab-text { letter-spacing: .48px; }
.tab-text { margin-left: 2px; flex: 1; min-width: 0; white-space: nowrap; line-height: 22px; }
.newtab { width: 29px; height: 24px; margin-left: 1px; border: 1px solid #2b2a27; border-bottom: 0; border-radius: 5px 5px 0 0; background: #494843; box-shadow: inset 0 1px #73726c; display: grid; place-items: center; }
.toolbar { height: 39px; flex: none; display: flex; align-items: center; padding: 0 6px 0 6px; border-bottom: 1px solid #9a9793; background: linear-gradient(#f6f5f4, #efedec); font-family: "Noto Sans", sans-serif; font-size: 14px; }
.urlbar, .search { height: 24px; background: #fff; border: 1px solid #a7a29c; border-radius: 4px; display: flex; align-items: center; }
.urlbar { width: 895px; margin-left: 12px; padding: 0 5px 0 6px; }
.url { margin-left: 6px; flex: 1; color: #8a8a8a; white-space: nowrap; letter-spacing: .3px; }
.url b { font-weight: 400; color: #3c3c3c; letter-spacing: .2px; }
.dd { margin-left: 7px; margin-top: 3px; }
.reload { margin-left: 6px; }
.search { width: 278px; margin-left: 10px; padding: 0 2px 0 3px; color: #929292; }
.goog { width: 16px; height: 16px; background: #3f7cf4; color: #fff; font: 700 17px/11px "Liberation Serif", serif; text-align: center; border-radius: 1px; }
.dd2 { margin-left: 4px; margin-top: 2px; }
.ph { margin-left: 6px; flex: 1; letter-spacing: .1px; }
.down { margin-left: 14px; }
.home { margin-left: 15px; }
.viewport { flex: 1; display: flex; min-height: 0; }
.page { flex: 1; background: #ebeff0; display: flex; flex-direction: column; min-width: 0; }
.brand { height: 100px; flex: none; padding: 19px 0 0 529px; }
.bt { font: italic 700 17px "Liberation Sans", sans-serif; fill: #1f97d7; }
.bs { font: italic 14px "Liberation Sans", sans-serif; fill: #2196d6; }
.card { flex: 1; width: 1020px; margin-left: 134px; display: flex; background: #fff; border-radius: 5px 5px 0 0; overflow: hidden; box-shadow: 1px 1px 2px rgba(0, 0, 0, .14); }
.side { width: 170px; flex: none; background: #2d3c4e; color: #fff; }
.sf { padding: 14px 0 0 26px; height: 44px; }
.sft { font: 900 27px Lato, sans-serif; fill: #929ca8; stroke: #929ca8; stroke-width: .7px; }
.profile { height: 191px; padding-top: 32px; border-bottom: 1px solid #435265; display: flex; flex-direction: column; align-items: center; }
.name { margin-top: 17px; font-size: 15px; line-height: 18px; letter-spacing: -.2px; }
.role { font-size: 13px; line-height: 20px; color: #dfe3e6; display: flex; align-items: center; gap: 4px; margin-top: 1px; }
.role i { width: 9px; height: 9px; border-radius: 50%; background: #2ecc71; }
.mlabel { margin: 30px 0 0 35px; font-size: 14px; line-height: 20px; color: #929ca6; letter-spacing: .3px; }
.menu { list-style: none; margin: 5px 0 0; padding: 0; display: flex; flex-direction: column; gap: 2px; }
.menu li { height: 37px; display: flex; align-items: center; font-size: 12px; padding-left: 25px; white-space: nowrap; }
.menu li.act { background: #fff; color: #2d3c4e; border-left: 4px solid #2ecc71; padding-left: 20px; }
.mi { width: 25px; color: #b4b8bd; }
.act .mi { color: #2d3c4e; }
.main { flex: 1; display: flex; flex-direction: column; }
.bar { height: 60px; flex: none; border-bottom: 1px solid #eceeef; display: flex; align-items: center; padding: 7px 30px 0 10px; color: #c4c6ca; }
.burger { margin-left: 9px; }
.hide { margin-left: 9px; font-size: 11px; line-height: 14px; padding-top: 2px; letter-spacing: .1px; }
.acts { margin-left: auto; display: flex; align-items: center; }
.act-i { position: relative; display: block; fill: #cbcdd2; }
.bell { margin-right: 30px; margin-top: -5px; }
.flag { margin-right: 28px; margin-top: -5px; }
.gear { margin-top: -5px; }
.badge { position: absolute; width: 21px; height: 26px; font: 15px/24px "Liberation Sans", sans-serif; color: #fff; text-align: center; clip-path: polygon(0 5%, 5% 0, 95% 0, 100% 5%, 100% 77%, 50% 100%, 0 77%); letter-spacing: -.3px; }
.red { background: #e74c3c; left: 14px; top: -9px; }
.blue { background: #3498db; left: 12px; top: -11px; }
.content { padding: 0 30px; }
.crumb { margin-top: 26px; font-size: 11px; line-height: 20px; color: #8d8f92; }
.crumb span { margin: 0 7px 0 9px; }
.crumb a { color: #2a97d4; letter-spacing: .15px; }
h1 { margin: 43px 0 0; font-size: 42px; font-weight: 400; letter-spacing: -.7px; line-height: 46px; color: #6f7884; display: flex; align-items: center; gap: 23px; }
h1 svg { margin-top: 5px; }
.create { margin: 64px 0 0; width: 73px; height: 33px; border: 0; border-radius: 4px; background: #2ecc71; color: #fff; font: 15px "Liberation Sans", sans-serif; padding: 0 0 0 12px; display: flex; align-items: center; gap: 4px; letter-spacing: -.15px; }
.grid { display: grid; grid-template-columns: 206px 312px 137px 135px; }
.grid > span { padding-left: 8px; }
.head { margin-top: 38px; height: 67px; line-height: 68px; font-size: 12px; font-weight: 700; letter-spacing: 1.080px; color: #757981; }
.row { height: 40px; line-height: 39px; font-size: 13px; color: #85878a; background: #f9f9f9; border-bottom: 1px solid #e9ebec; }
.link { color: #2a97d4; }
.ops { display: flex; align-items: center; gap: 4px; }
.pager { margin: 40px 0 0 210px; display: flex; align-items: center; gap: 4px; font-size: 14px; color: #222; white-space: nowrap; }
.pager a { height: 32px; line-height: 30px; padding: 0 14.300px; border: 1px solid #ddd; border-radius: 15px; color: #428bca; }
.pager span { letter-spacing: .12px; }
.pager a.off { color: #999; }
.scroll { width: 13px; flex: none; background: #dedad7; border-left: 1px solid #a5a19d; display: flex; flex-direction: column; }
.sbtn { height: 13px; display: grid; place-items: center; background: #eceae8; border: 1px solid #c5c2bf; border-radius: 6px 6px 0 0; }
.thumb { height: 511px; border: 1px solid #a5a19d; border-left: 0; border-radius: 6px; background: linear-gradient(90deg, #faf9f8, #e8e6e4); display: flex; flex-direction: column; align-items: center; justify-content: center; gap: 2px; }
.thumb i { width: 5px; height: 1px; background: #999; }
.sbtn.end { margin-top: auto; border-radius: 0 0 6px 6px; }
.cursor { position: absolute; left: 561px; top: 604px; }
</style>
